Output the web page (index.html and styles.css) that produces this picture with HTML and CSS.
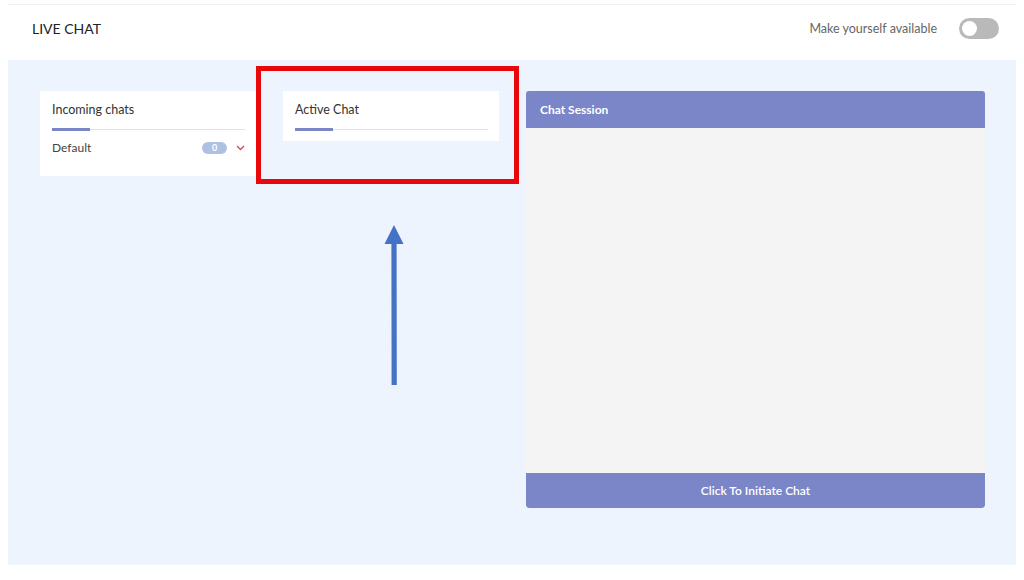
FILE: index.html
```html
<!DOCTYPE html>
<html>
  <head>
    <meta charset="utf-8" />
    <title>Live Chat</title>
    <link rel="stylesheet" href="styles.css">
  </head>
  <body>
    <div class="page">
      <header class="topbar">
        <h1>LIVE CHAT</h1>
        <label class="avail">
          Make yourself available
          <span class="toggle"><span class="knob"></span></span>
        </label>
      </header>

      <main class="panel">
        <section class="card incoming">
          <h2>Incoming chats</h2>
          <div class="rule"><span></span></div>
          <div class="queue">
            <span>Default</span>
            <span class="badge">0</span>
            <svg class="chev" width="9" height="6" viewBox="0 0 9 6">
              <path d="M1 1l3.5 3.5L8 1" fill="none" stroke="#d9455a" stroke-width="1.3"/>
            </svg>
          </div>
        </section>

        <section class="card active">
          <h2>Active Chat</h2>
          <div class="rule"><span></span></div>
        </section>

        <section class="session">
          <div class="session-head">Chat Session</div>
          <div class="session-body"></div>
          <button class="initiate">Click To Initiate Chat</button>
        </section>

        <!-- annotation overlay -->
        <div class="callout"></div>
        <svg class="arrow" width="24" height="164" viewBox="0 0 24 164">
          <path d="M12 2L21.5 21H14.6L14.8 162H9.6L9.4 21H2.5Z" fill="#4472c4"/>
        </svg>
      </main>
    </div>
  </body>
</html>
```

FILE: styles.css
```css
* {
  box-sizing: border-box;
}

body {
  margin: 0;
  background: #fff;
  font-family: Lato, "Open Sans", sans-serif;
  color: #333;
}

.page {
  width: 1008px;
  margin: 4px 8px 0;
}

.topbar {
  height: 56px;
  border-top: 1px solid #f0f0f0;
  display: flex;
  align-items: center;
  justify-content: space-between;
  padding: 0 17px 8px 24px;
}

.topbar h1 {
  margin: 0;
  font-size: 14px;
  font-weight: 400;
  color: #222;
}

.avail {
  display: flex;
  align-items: center;
  gap: 22px;
  font-size: 12.5px;
  color: #666;
}

.toggle {
  width: 40px;
  height: 21px;
  border-radius: 11px;
  background: #b9b9b9;
  padding: 3px;
  display: flex;
}

.knob {
  width: 15px;
  height: 15px;
  border-radius: 50%;
  background: #fff;
}

.panel {
  position: relative;
  height: 505px;
  background: #eef4fd;
  padding: 31px 31px 0 32px;
  display: flex;
  align-items: flex-start;
}

.card {
  background: #fff;
  padding: 11px 12px 0;
}

.card h2 {
  margin: 0;
  font-size: 12.5px;
  font-weight: 400;
  color: #333;
  line-height: 16px;
}

.rule {
  margin-top: 10px;
  height: 3px;
  position: relative;
}

.rule::before {
  content: '';
  position: absolute;
  left: 0;
  right: 0;
  top: 1px;
  height: 1px;
  background: #e2e2e2;
}

.rule span {
  position: relative;
  display: block;
  width: 38px;
  height: 3px;
  background: #7a86c8;
}

.incoming {
  width: 220px;
  height: 85px;
  padding-right: 15px;
}

.queue {
  display: flex;
  align-items: center;
  margin-top: 9px;
  font-size: 12px;
  color: #444;
}

.queue span:first-child {
  flex: 1;
}

.badge {
  width: 25px;
  height: 12px;
  border-radius: 6px;
  background: #aec0e4;
  color: #fff;
  font-size: 9px;
  font-weight: 700;
  text-align: center;
  line-height: 12px;
}

.chev {
  margin-left: 9px;
}

.active {
  width: 216px;
  height: 50px;
  margin-left: 23px;
  padding-right: 11px;
}

.session {
  width: 459px;
  margin-left: 27px;
  display: flex;
  flex-direction: column;
  border-radius: 3px;
  overflow: hidden;
}

.session-head {
  height: 37px;
  background: #7a86c8;
  color: #fff;
  font-size: 12px;
  font-weight: 700;
  padding: 11px 14px;
}

.session-body {
  height: 345px;
  background: #f4f4f4;
}

.initiate {
  height: 35px;
  border: 0;
  background: #7a86c8;
  color: #fff;
  font: inherit;
  font-size: 12px;
  font-weight: 600;
  border-radius: 0 0 3px 3px;
}

.callout {
  position: absolute;
  left: 248px;
  top: 6px;
  width: 263px;
  height: 118px;
  border: 5px solid #e8070b;
}

.arrow {
  position: absolute;
  left: 374px;
  top: 163px;
}
```
